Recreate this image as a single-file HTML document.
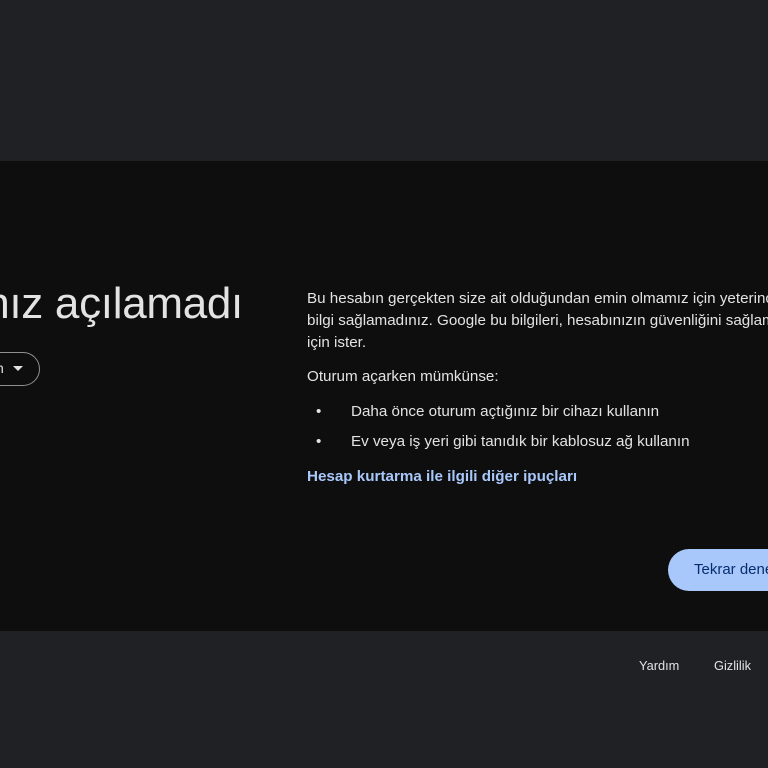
<!DOCTYPE html>
<html><head><meta charset="utf-8"><style>
*{margin:0;padding:0;box-sizing:border-box}
html,body{width:768px;height:768px;overflow:hidden;background:#202124;font-family:"Liberation Sans",sans-serif}
body{position:relative}
.card{position:absolute;left:0;top:161px;width:768px;height:470px;background:#0e0e0e}
.t{position:absolute;white-space:nowrap}
.clip{position:absolute;left:0;top:0;width:768px;height:768px;overflow:hidden}
.title{right:525px;top:279px;font-size:44px;color:#e3e3e3;letter-spacing:-0.3px}
.chip{position:absolute;left:-40px;top:352px;width:80px;height:34px;border:1px solid #8e918f;border-radius:17px}
.p{left:307px;font-size:15.2px;color:#e3e3e3}
.btn{position:absolute;left:668px;top:549px;width:140px;height:42px;border-radius:21px;background:#a8c7fa;color:#062e6f;font-size:15px;padding:12px 0 0 26px;white-space:nowrap}
.f{font-size:12.8px;color:#e3e3e3;top:658px}
</style></head><body>
<div class="card"></div>
<div class="clip">
<div class="t title">Hesabınız açılamadı</div>
<div class="chip"></div>
<div class="t" style="left:-4px;top:360px;font-size:14px;color:#e3e3e3">n</div>
<svg class="t" style="left:13px;top:366px" width="10" height="6"><path d="M0 0L10 0L5 5Z" fill="#e3e3e3"/></svg>
<div class="t p" style="top:290px">Bu hesabın gerçekten size ait olduğundan emin olmamız için yeterince</div>
<div class="t p" style="top:312px">bilgi sağlamadınız. Google bu bilgileri, hesabınızın güvenliğini sağlamak</div>
<div class="t p" style="top:334px">için ister.</div>
<div class="t p" style="top:368px">Oturum açarken mümkünse:</div>
<div class="t p" style="top:403px;left:316px">•</div>
<div class="t p" style="top:403px;left:351px">Daha önce oturum açtığınız bir cihazı kullanın</div>
<div class="t p" style="top:433px;left:316px">•</div>
<div class="t p" style="top:433px;left:351px">Ev veya iş yeri gibi tanıdık bir kablosuz ağ kullanın</div>
<div class="t p" style="top:468px;color:#a8c7fa;font-weight:bold">Hesap kurtarma ile ilgili diğer ipuçları</div>
<div class="btn">Tekrar dene</div>
<div class="t f" style="left:639px">Yardım</div>
<div class="t f" style="left:714px">Gizlilik</div>
</div>
</body></html>
